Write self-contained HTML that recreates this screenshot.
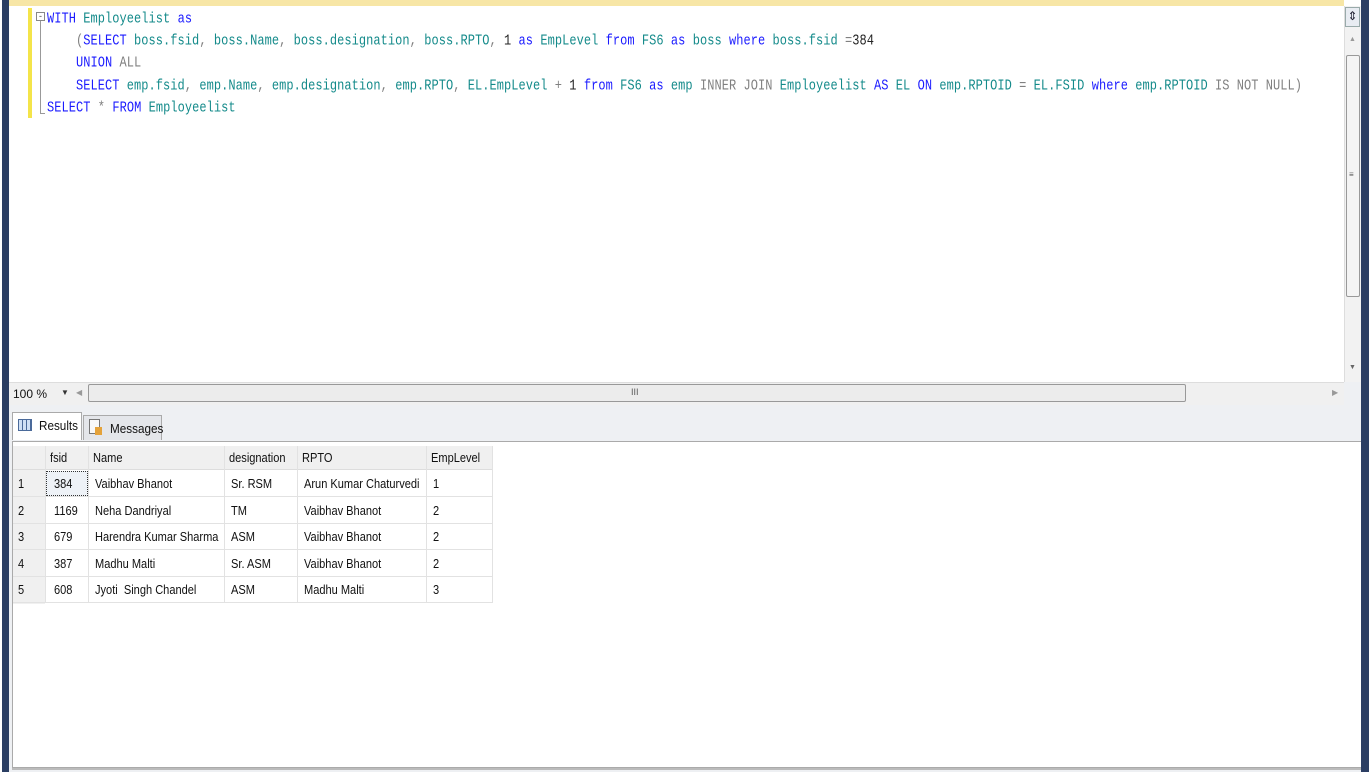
<!DOCTYPE html>
<html><head><meta charset="utf-8"><style>
*{margin:0;padding:0;box-sizing:border-box}
body{width:1369px;height:772px;overflow:hidden;background:#eef0f3;position:relative;font-family:"Liberation Sans",sans-serif}
.abs{position:absolute}
.code{font-family:"Liberation Mono",monospace;font-size:12px;white-space:pre;letter-spacing:0.05px;transform:scaleY(1.2);transform-origin:0 50%}
.k{color:#1a1aff}.t{color:#138a8a}.g{color:#808080}.b{color:#222}
.cell{position:absolute;font-size:13px;color:#111;transform:scaleX(0.85);transform-origin:0 50%;white-space:nowrap}
</style></head><body>
<div class="abs" style="left:0;top:0;width:9px;height:772px;background:#fff"></div>
<div class="abs" style="left:2px;top:0;width:7px;height:772px;background:#2b3e63"></div>
<div class="abs" style="left:1361px;top:0;width:8px;height:772px;background:#2b3e63"></div>
<div class="abs" style="left:9px;top:0;width:1352px;height:382px;background:#fff"></div>
<div class="abs" style="left:9px;top:0;width:1335px;height:6px;background:#f7e6a6"></div>
<div class="abs" style="left:28px;top:8px;width:4px;height:110px;background:#f4e44a"></div>
<div class="abs" style="left:36px;top:12px;width:9px;height:9px;border:1px solid #888;background:#fff;font-size:9px;line-height:6px;text-align:center;color:#444">-</div>
<div class="abs" style="left:40px;top:21px;width:1px;height:93px;background:#999"></div>
<div class="abs" style="left:40px;top:113px;width:5px;height:1px;background:#999"></div>
<div class="abs code" style="left:47px;top:12px"><span class="k">WITH</span> <span class="t">Employeelist</span> <span class="k">as</span></div>
<div class="abs code" style="left:76px;top:34px"><span class="g">(</span><span class="k">SELECT</span> <span class="t">boss.fsid</span><span class="g">,</span> <span class="t">boss.Name</span><span class="g">,</span> <span class="t">boss.designation</span><span class="g">,</span> <span class="t">boss.RPTO</span><span class="g">,</span> <span class="b">1</span> <span class="k">as</span> <span class="t">EmpLevel</span> <span class="k">from</span> <span class="t">FS6</span> <span class="k">as</span> <span class="t">boss</span> <span class="k">where</span> <span class="t">boss.fsid</span> <span class="g">=</span><span class="b">384</span></div>
<div class="abs code" style="left:76px;top:56px"><span class="k">UNION</span> <span class="g">ALL</span></div>
<div class="abs code" style="left:76px;top:79px"><span class="k">SELECT</span> <span class="t">emp.fsid</span><span class="g">,</span> <span class="t">emp.Name</span><span class="g">,</span> <span class="t">emp.designation</span><span class="g">,</span> <span class="t">emp.RPTO</span><span class="g">,</span> <span class="t">EL.EmpLevel</span> <span class="g">+</span> <span class="b">1</span> <span class="k">from</span> <span class="t">FS6</span> <span class="k">as</span> <span class="t">emp</span> <span class="g">INNER JOIN</span> <span class="t">Employeelist</span> <span class="k">AS</span> <span class="t">EL</span> <span class="k">ON</span> <span class="t">emp.RPTOID</span> <span class="g">=</span> <span class="t">EL.FSID</span> <span class="k">where</span> <span class="t">emp.RPTOID</span> <span class="g">IS NOT NULL)</span></div>
<div class="abs code" style="left:47px;top:101px"><span class="k">SELECT</span> <span class="g">*</span> <span class="k">FROM</span> <span class="t">Employeelist</span></div>
<div class="abs" style="left:1344px;top:6px;width:17px;height:376px;background:#f2f2f2;border-left:1px solid #ddd"></div>
<div class="abs" style="left:1345px;top:7px;width:15px;height:20px;background:#e8ecf2;border:1px solid #9aa;font-size:12px;line-height:16px;text-align:center;color:#223">⇕</div>
<div class="abs" style="left:1349px;top:36px;font-size:7px;color:#999">▲</div>
<div class="abs" style="left:1346px;top:55px;width:14px;height:242px;background:#f4f4f4;border:1px solid #999;border-radius:2px"></div>
<div class="abs" style="left:1349px;top:170px;font-size:8px;color:#555">≡</div>
<div class="abs" style="left:1349px;top:364px;font-size:7px;color:#666">▼</div>
<div class="abs" style="left:9px;top:382px;width:1335px;height:23px;background:#f0f0f0;border-top:1px solid #ddd"></div>
<div class="abs" style="left:13px;top:387px;font-size:12px;color:#111">100 %</div>
<div class="abs" style="left:61px;top:388px;font-size:8px;color:#333">▼</div>
<div class="abs" style="left:76px;top:388px;font-size:8px;color:#999">◀</div>
<div class="abs" style="left:88px;top:384px;width:1098px;height:18px;background:#ececec;border:1px solid #999;border-radius:2px"></div>
<div class="abs" style="left:631px;top:387px;font-size:9px;color:#555">III</div>
<div class="abs" style="left:1332px;top:388px;font-size:8px;color:#999">▶</div>
<div class="abs" style="left:9px;top:405px;width:1352px;height:38px;background:#eef0f3"></div>
<div class="abs" style="left:12px;top:412px;width:70px;height:28px;background:#fff;border:1px solid #aaa;border-bottom:none"></div>
<div class="abs" style="left:18px;top:419px;width:14px;height:12px;border:1px solid #4a6a9a;background:repeating-linear-gradient(90deg,#cfe0f5 0 3px,#4a6a9a 3px 4px)"></div>
<div class="abs" style="left:39px;top:418px;font-size:13px;color:#111;transform:scaleX(.9);transform-origin:0 0">Results</div>
<div class="abs" style="left:83px;top:415px;width:79px;height:25px;background:#e4e6ea;border:1px solid #aaa;border-bottom:none"></div>
<div class="abs" style="left:89px;top:419px;width:11px;height:15px;border:1px solid #777;background:#f8f8f8"></div>
<div class="abs" style="left:95px;top:427px;width:7px;height:8px;background:#e4a23a"></div>
<div class="abs" style="left:110px;top:421px;font-size:13px;color:#111;transform:scaleX(.9);transform-origin:0 0">Messages</div>
<div class="abs" style="left:12px;top:441px;width:1349px;height:327px;background:#fff;border:1px solid #aaa;border-right:none;box-shadow:0 2px 0 #bbb"></div>
<div class="abs" style="left:13px;top:446px;width:480px;height:24px;background:#f0f0f0;border-bottom:1px solid #ddd"></div>
<div class="abs" style="left:13px;top:470px;width:32px;height:134px;background:#f0f0f0"></div>
<div class="abs" style="left:46px;top:471px;width:42px;height:25px;background:#eef2f7;border:1px dotted #333"></div>
<div id="g"></div>
<script>
var cols=[13,45,88,224,297,426,492];
var g='';
var hdr=['','fsid','Name','designation','RPTO','EmpLevel'];
var rows=[['1','384','Vaibhav Bhanot','Sr. RSM','Arun Kumar Chaturvedi','1'],['2','1169','Neha Dandriyal','TM','Vaibhav Bhanot','2'],['3','679','Harendra Kumar Sharma','ASM','Vaibhav Bhanot','2'],['4','387','Madhu Malti','Sr. ASM','Vaibhav Bhanot','2'],['5','608','Jyoti&nbsp; Singh Chandel','ASM','Madhu Malti','3']];
for(var c=1;c<cols.length;c++)g+='<div class="abs" style="left:'+cols[c]+'px;top:446px;width:1px;height:157px;background:#e2e2e2"></div>';
for(var c=0;c<6;c++)g+='<div class="cell" style="left:'+(cols[c]+5)+'px;top:450px">'+hdr[c]+'</div>';
for(var r=0;r<5;r++){var y=470+r*26.6;
g+='<div class="abs" style="left:13px;top:'+(y+26)+'px;width:480px;height:1px;background:#e2e2e2"></div>';
for(var c=0;c<6;c++){var x=cols[c]+(c==0?5:(c==1?9:7));g+='<div class="cell" style="left:'+x+'px;top:'+(y+6)+'px">'+rows[r][c]+'</div>';}}
document.getElementById('g').innerHTML=g;
</script>
</body></html>
